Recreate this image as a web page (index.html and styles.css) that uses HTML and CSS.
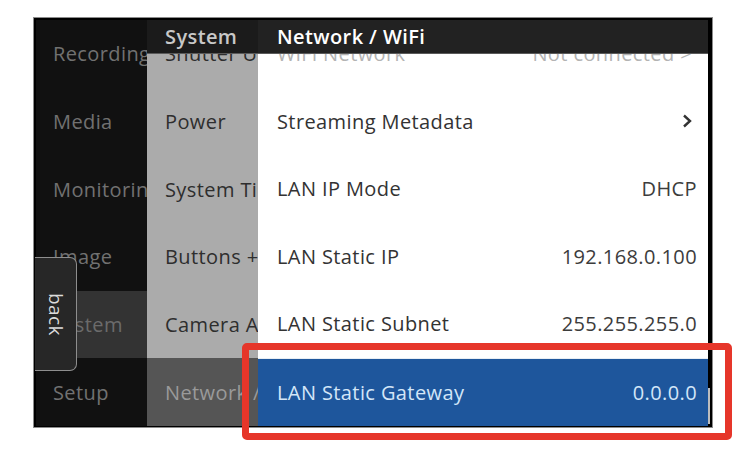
FILE: index.html
```html
<!DOCTYPE html>
<html>
<head>
<meta charset="utf-8">
<link rel="stylesheet" href="styles.css">
</head>
<body>
<div class="page">
  <div class="screen">
    <div class="col col1">
      <div class="row">Recording</div>
      <div class="row">Media</div>
      <div class="row">Monitoring</div>
      <div class="row">Image</div>
      <div class="row sel">System</div>
      <div class="row">Setup</div>
    </div>
    <div class="col col2">
      <div class="row">Shutter Unit</div>
      <div class="row">Power</div>
      <div class="row">System Time</div>
      <div class="row">Buttons + Controls</div>
      <div class="row">Camera Audio</div>
      <div class="row sel">Network / WiFi</div>
    </div>
    <div class="col col3">
      <div class="row dim"><span>WiFi Network</span><span class="val">Not connected &gt;</span></div>
      <div class="row"><span>Streaming Metadata</span><svg class="chev" width="10" height="14" viewBox="0 0 10 14"><polyline points="2,1.5 8,7 2,12.5" fill="none" stroke="#333" stroke-width="2.4"/></svg></div>
      <div class="row"><span>LAN IP Mode</span><span class="val">DHCP</span></div>
      <div class="row"><span>LAN Static IP</span><span class="val">192.168.0.100</span></div>
      <div class="row"><span>LAN Static Subnet</span><span class="val">255.255.255.0</span></div>
      <div class="row sel"><span>LAN Static Gateway</span><span class="val">0.0.0.0</span></div>
    </div>
    <div class="scroll"><div class="thumb"></div></div>
    <div class="header">
      <div class="h2">System</div>
      <div class="h3">Network / WiFi</div>
    </div>
    <div class="back"><span>back</span></div>
  </div>
  <div class="highlight"></div>
</div>
</body>
</html>
```
FILE: styles.css
```css
html, body {
  margin: 0;
  padding: 0;
  background: #ffffff;
}
body {
  font-family: "Open Sans", "Noto Sans", sans-serif;
  font-size: 20px;
  letter-spacing: 0.4px;
  width: 740px;
  height: 476px;
  overflow: hidden;
}
.page {
  position: relative;
  padding: 17px 0 0 33px;
}
.screen {
  position: relative;
  box-sizing: border-box;
  width: 680px;
  height: 411px;
  border: 1px solid #8c8c8c;
  background: #000;
  padding: 2px 0 1px 2px;
  display: flex;
}
.col {
  display: flex;
  flex-direction: column;
}
.row {
  flex: 1;
  display: flex;
  align-items: center;
  white-space: nowrap;
  overflow: hidden;
}
.col1 {
  width: 111px;
  background: #111111;
  color: #717171;
}
.col1 .row {
  padding-left: 17px;
}
.col1 .row.sel {
  background: #333333;
  color: #6b6b6b;
}
.col2 {
  width: 111px;
  background: #ababab;
  color: #2e2e2e;
}
.col2 .row {
  padding-left: 18px;
}
.col2 .row.sel {
  background: #555555;
  color: #9a9a9a;
}
.col3 {
  flex: 1;
  background: #ffffff;
  color: #333333;
}
.col3 .row {
  padding: 0 11px 0 19px;
  justify-content: space-between;
}
.col3 .row .val {
  color: #3c3c3c;
}
.col3 .row.dim,
.col3 .row.dim .val {
  color: #b3b3b3;
}
.col3 .row.dim .val {
  padding-right: 5px;
}
.col3 .row .chev {
  margin-right: 5px;
}
.col3 .row.sel {
  background: #1e569c;
  color: #d3e6f8;
  border-top: 1px solid #e8eef4;
}
.col3 .row.sel .val {
  color: #d3e6f8;
}
.scroll {
  width: 4px;
  background: #000;
  display: flex;
  flex-direction: column;
  justify-content: flex-end;
  padding-bottom: 2px;
  box-sizing: border-box;
}
.thumb {
  width: 2px;
  height: 36px;
  background: #bdbdbd;
}
.header {
  position: absolute;
  left: 113px;
  top: 2px;
  right: 4px;
  height: 33px;
  display: flex;
  border-bottom: 1px solid #5a5a5a;
  font-weight: 600;
}
.h2 {
  width: 111px;
  background: #1b1b1b;
  color: #c8c8c8;
  padding-left: 18px;
  box-sizing: border-box;
  line-height: 33px;
}
.h3 {
  flex: 1;
  background: #222222;
  color: #ffffff;
  padding-left: 19px;
  line-height: 33px;
}
.back {
  position: absolute;
  left: 1px;
  top: 239px;
  width: 42px;
  height: 114px;
  box-sizing: border-box;
  border: 1px solid #8e8e8e;
  border-left: none;
  border-radius: 0 7px 7px 0;
  background: #272727;
  display: flex;
  align-items: center;
  justify-content: center;
}
.back span {
  writing-mode: vertical-rl;
  color: #dcdcdc;
  font-size: 19px;
  line-height: 1;
}
.highlight {
  position: absolute;
  left: 242px;
  top: 343px;
  width: 490px;
  height: 97px;
  box-sizing: border-box;
  border: 7px solid #e6362a;
  border-radius: 5px;
}
```
